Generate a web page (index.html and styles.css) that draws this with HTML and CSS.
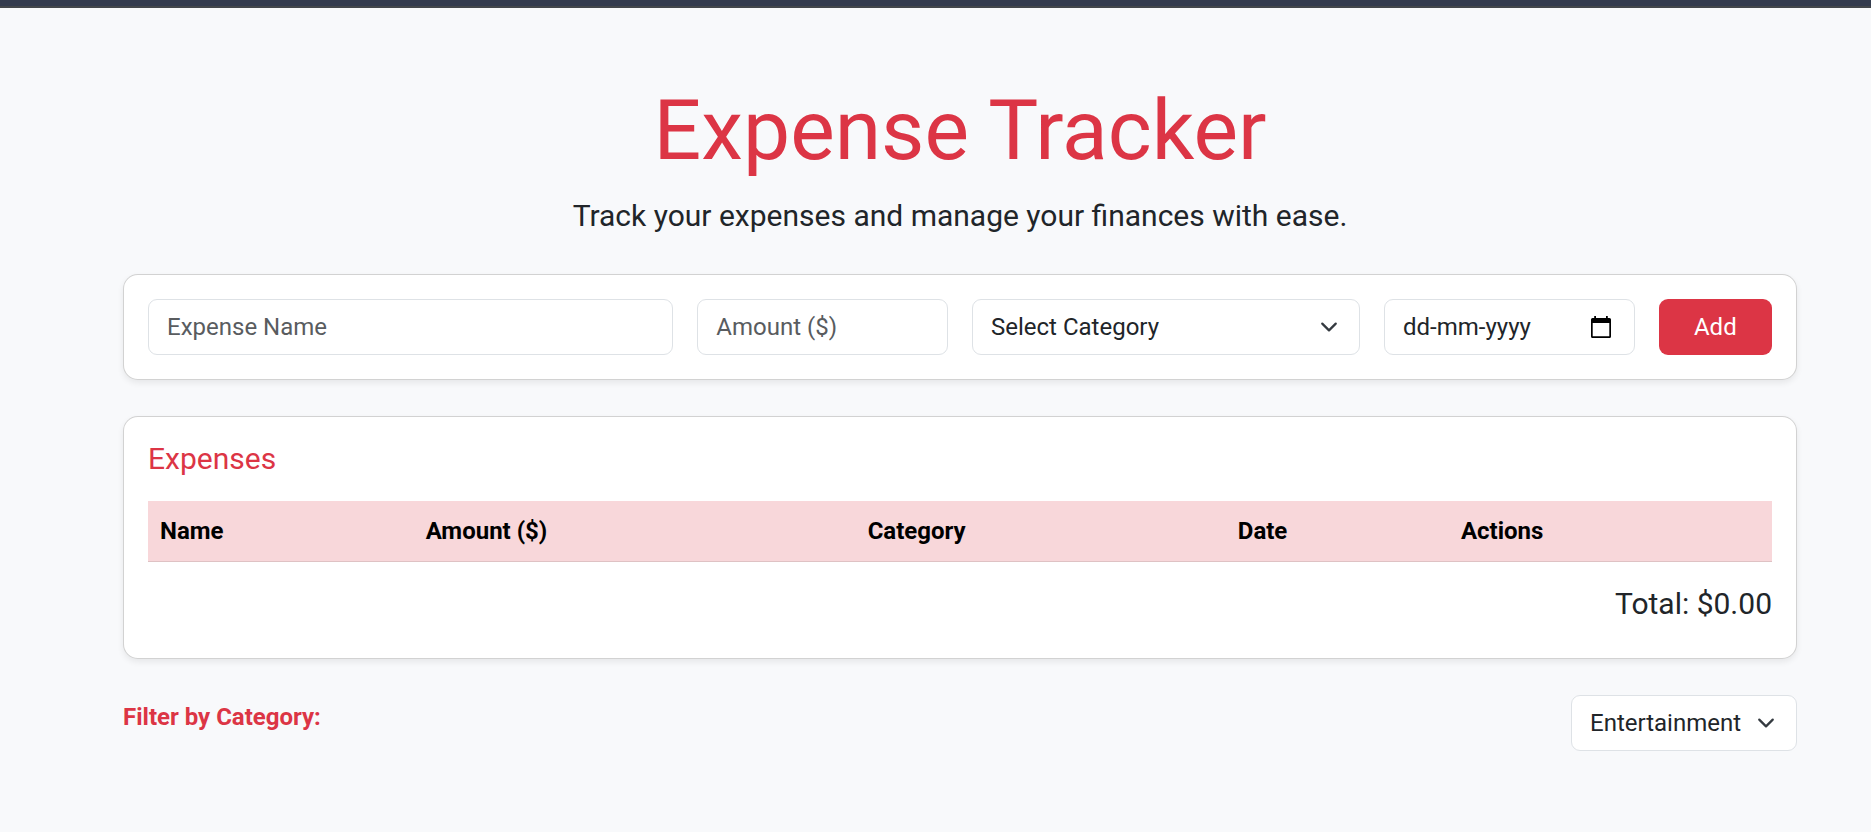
FILE: index.html
```html
<!DOCTYPE html>
<html lang="en">
	<head>
		<meta charset="utf-8" />
		<meta name="viewport" content="width=device-width, initial-scale=1" />
		<title>Expense Tracker</title>
		<link rel="stylesheet" href="styles.css">
	</head>
	<body>
		<main class="container">
			<header>
				<h1>Expense Tracker</h1>
				<p class="lead">Track your expenses and manage your finances with ease.</p>
			</header>

			<form class="card expense-form" id="expense-form">
				<input class="control name" type="text" id="name" placeholder="Expense Name" aria-label="Expense Name" required>
				<input class="control amount" type="text" inputmode="decimal" id="amount" placeholder="Amount ($)" aria-label="Amount ($)" required>
				<select class="control select category" id="category" aria-label="Category" required>
					<option value="" selected>Select Category</option>
					<option>Food</option>
					<option>Transport</option>
					<option>Entertainment</option>
					<option>Other</option>
				</select>
				<input class="control date" type="text" id="date" placeholder="dd-mm-yyyy" aria-label="Date" required>
				<button class="btn" type="submit">Add</button>
			</form>

			<section class="card">
				<h2>Expenses</h2>
				<table>
					<thead>
						<tr>
							<th scope="col">Name</th>
							<th scope="col">Amount ($)</th>
							<th scope="col">Category</th>
							<th scope="col">Date</th>
							<th scope="col">Actions</th>
						</tr>
					</thead>
					<tbody id="expense-list"></tbody>
				</table>
				<div class="total">Total: $<span id="total">0.00</span></div>
			</section>

			<div class="filter">
				<label for="filter">Filter by Category:</label>
				<select class="control select" id="filter">
					<option>All</option>
					<option>Food</option>
					<option>Transport</option>
					<option selected>Entertainment</option>
					<option>Other</option>
				</select>
			</div>
		</main>
	</body>
</html>
```

FILE: styles.css
```css
:root {
	--red: #dc3545;
	--text: #212529;
	--border: #dee2e6;
}

* {
	box-sizing: border-box;
	margin: 0;
}

body {
	background: #f8f9fb;
	border-top: 6px solid #343c4e;
	color: var(--text);
	font-family: Roboto, "Liberation Sans", sans-serif;
	font-size: 24px;
	line-height: 36px;
}

.container {
	padding: 72px 74px 72px 123px;
	border-top: 2px solid #43474b;
}

header {
	margin-bottom: 36px;
	text-align: center;
}

h1 {
	margin-bottom: 12px;
	color: var(--red);
	font-size: 84px;
	font-weight: 400;
	line-height: 101px;
}

.lead {
	font-size: 30px;
	line-height: 45px;
}

.card {
	margin-bottom: 36px;
	padding: 24px;
	background: white;
	border: 1px solid rgba(0, 0, 0, 0.175);
	border-radius: 15px;
	box-shadow: 0 3px 6px rgba(0, 0, 0, 0.075);
}

.expense-form {
	display: grid;
	grid-template-columns: repeat(12, 1fr);
	gap: 24px;
}

.name {
	grid-column: span 4;
}

.amount, .date {
	grid-column: span 2;
}

.category {
	grid-column: span 3;
}

.control {
	appearance: none;
	min-width: 0;
	height: 56px;
	padding: 9px 18px;
	background: white;
	border: 1px solid var(--border);
	border-radius: 9px;
	color: var(--text);
	font: inherit;
}

.control::placeholder {
	color: #595c5f;
	opacity: 1;
}

.select {
	padding-right: 54px;
	background: white url("data:image/svg+xml,%3Csvg xmlns='http://www.w3.org/2000/svg' viewBox='0 0 16 16'%3E%3Cpath fill='none' stroke='%23343a40' stroke-linecap='round' stroke-linejoin='round' stroke-width='2' d='m2 5 6 6 6-6'/%3E%3C/svg%3E") no-repeat right 18px center / 24px 18px;
}

.date {
	padding-right: 48px;
	background: white url("data:image/svg+xml,%3Csvg xmlns='http://www.w3.org/2000/svg' viewBox='0 0 20 22'%3E%3Cpath fill-rule='evenodd' d='M3.200 0h1.800v2h10V0h1.800v2h1.700A1.500 1.500 0 0 1 20 3.500v17a1.500 1.500 0 0 1-1.500 1.500h-17A1.500 1.500 0 0 1 0 20.500v-17A1.500 1.500 0 0 1 1.500 2h1.700zM1.700 7v13.300h16.600V7z'/%3E%3C/svg%3E") no-repeat right 23px center / 20px 22px;
}

.date::placeholder {
	color: var(--text);
}

.btn {
	height: 56px;
	padding: 0;
	background: var(--red);
	border: 0;
	border-radius: 9px;
	color: white;
	font: inherit;
	cursor: pointer;
}

h2 {
	margin-bottom: 24px;
	color: var(--red);
	font-size: 30px;
	font-weight: 400;
	line-height: 36px;
}

table {
	width: 100%;
	margin-bottom: 24px;
	border-collapse: collapse;
}

th {
	padding: 12px;
	background: #f8d7da;
	border-bottom: 1px solid #dfc2c4;
	color: black;
	font-weight: 700;
	text-align: left;
}

.total {
	margin-bottom: 12px;
	font-size: 30px;
	text-align: right;
}

.filter {
	display: flex;
	justify-content: space-between;
	align-items: center;
}

.filter label {
	margin-bottom: 12px;
	color: var(--red);
	font-weight: 700;
}
```
